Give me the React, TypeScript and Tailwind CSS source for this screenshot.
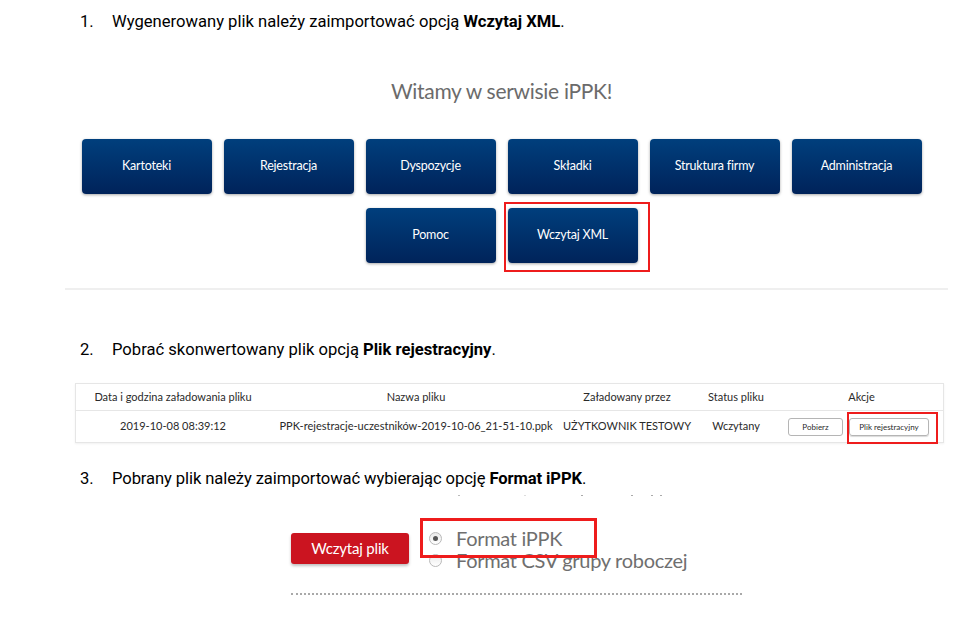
const tiles = [
  "Kartoteki",
  "Rejestracja",
  "Dyspozycje",
  "Składki",
  "Struktura firmy",
  "Administracja",
];

const Tile = ({ label }: { label: string }) => (
  <div className="w-[130px] h-[55px] rounded-[4px] bg-gradient-to-b from-[#003f7d] to-[#00235a] shadow-[0_1px_3px_rgba(0,0,0,0.35)] flex items-center justify-center text-white text-[12.5px] tracking-[-0.2px] font-['Lato']">
    {label}
  </div>
);

const Step = ({ n, children }: { n: string; children: React.ReactNode }) => (
  <div className="flex pl-[80px] text-[16.6px] leading-[24px] text-black">
    <span className="w-[32px]">{n}</span>
    <span>{children}</span>
  </div>
);

const Radio = ({ checked }: { checked?: boolean }) => (
  <span className="w-[13px] h-[13px] rounded-full border border-[#b9b9b9] bg-gradient-to-b from-[#e9e9e9] to-white flex items-center justify-center shrink-0">
    {checked && <span className="w-[5px] h-[5px] rounded-full bg-[#555]" />}
  </span>
);

export default function App() {
  return (
    <div className="w-[969px] h-[618px] bg-white overflow-hidden font-['Roboto'] pt-[10px]">
      <Step n="1.">
        Wygenerowany plik należy zaimportować opcją <b>Wczytaj XML</b>.
      </Step>

      {/* iPPK start page */}
      <div className="mt-[43px] flex flex-col items-center pl-[34px]">
        <h1 className="font-['Lato'] text-[21px] leading-[28px] text-[#6b6b6b] tracking-[-0.3px]">
          Witamy w serwisie iPPK!
        </h1>
        <div className="mt-[34px] flex gap-[12px]">
          {tiles.map((t) => (
            <Tile key={t} label={t} />
          ))}
        </div>
        <div className="mt-[14px] flex gap-[12px]">
          <Tile label="Pomoc" />
          <div className="relative">
            <Tile label="Wczytaj XML" />
            <div className="absolute left-[-4px] top-[-6px] right-[-12px] bottom-[-9px] border-2 border-[#ee1c1c]" />
          </div>
        </div>
      </div>
      <div className="mt-[25px] ml-[65px] w-[883px] h-[2px] bg-[#efefef]" />

      <div className="mt-[48px]">
        <Step n="2.">
          Pobrać skonwertowany plik opcją <b>Plik rejestracyjny</b>.
        </Step>
      </div>

      {/* uploaded files table */}
      <div className="mt-[21px] ml-[75px] w-[869px] border border-[#e6e6e6] shadow-[0_1px_2px_rgba(0,0,0,0.06)] font-['Lato'] text-[11px] text-[#2a2a2a] whitespace-nowrap">
        <div className="flex h-[27px] items-center text-center border-b border-[#e6e6e6]">
          <div className="w-[194px]">Data i godzina załadowania pliku</div>
          <div className="w-[292px]">Nazwa pliku</div>
          <div className="w-[130px]">Załadowany przez</div>
          <div className="w-[88px]">Status pliku</div>
          <div className="flex-1">Akcje</div>
        </div>
        <div className="flex h-[31px] items-center text-center">
          <div className="w-[194px]">2019-10-08 08:39:12</div>
          <div className="w-[292px]">PPK-rejestracje-uczestników-2019-10-06_21-51-10.ppk</div>
          <div className="w-[130px]">UŻYTKOWNIK TESTOWY</div>
          <div className="w-[88px]">Wczytany</div>
          <div className="flex-1 flex gap-[6px] pl-[8px]">
            <div className="w-[55px] h-[18px] border border-[#b5b5b5] rounded-[3px] text-[8px] flex items-center justify-center">
              Pobierz
            </div>
            <div className="relative">
              <div className="w-[80px] h-[18px] border border-[#b5b5b5] rounded-[3px] text-[8px] flex items-center justify-center shadow-[0_1px_1px_rgba(0,0,0,0.15)]">
                Plik rejestracyjny
              </div>
              <div className="absolute left-[-2px] top-[-6px] right-[-9px] bottom-[-8px] border-2 border-[#ee1c1c]" />
            </div>
          </div>
        </div>
      </div>

      <div className="mt-[24px] tracking-[-0.1px]">
        <Step n="3.">
          Pobrany plik należy zaimportować wybierając opcję <b>Format iPPK</b>.
        </Step>
      </div>

      {/* cut-off line of text */}
      <div className="mt-[4px] ml-[458px] flex h-[2px]">
        <span className="w-[2px] h-[1px] bg-[#bbb]" />
        <span className="ml-[64px] w-[2px] h-[1px] bg-[#ddd]" />
        <span className="ml-[55px] w-[2px] h-[1px] bg-[#aaa]" />
        <span className="ml-[48px] w-[2px] h-[1px] bg-[#aaa]" />
        <span className="ml-[18px] w-[2px] h-[1px] bg-[#aaa]" />
        <span className="ml-[7px] w-[2px] h-[1px] bg-[#aaa]" />
      </div>

      {/* import form */}
      <div className="mt-[22px] ml-[291px] flex items-start font-['Lato']">
        <div className="mt-[14px] w-[118px] h-[31px] rounded-[3px] bg-[#cb1420] shadow-[0_2px_3px_rgba(0,0,0,0.25)] text-white text-[15px] flex items-center justify-center tracking-[-0.2px]">
          Wczytaj plik
        </div>
        <div className="relative ml-[20px] mt-[8px] text-[#6f6f6f] text-[20px] leading-[23px] tracking-[-0.3px]">
          <div className="flex items-center gap-[14px]">
            <Radio checked />
            <span>Format iPPK</span>
          </div>
          <div className="flex items-center gap-[14px] -mt-[1px]">
            <Radio />
            <span>Format CSV grupy roboczej</span>
          </div>
          <div className="absolute left-[-9px] top-[-9px] w-[177px] h-[40px] border-[3px] border-[#ee1c1c]" />
        </div>
      </div>
      <div className="mt-[21px] ml-[291px] w-[451px] border-t-2 border-dotted border-[#a9a9a9]" />
    </div>
  );
}
